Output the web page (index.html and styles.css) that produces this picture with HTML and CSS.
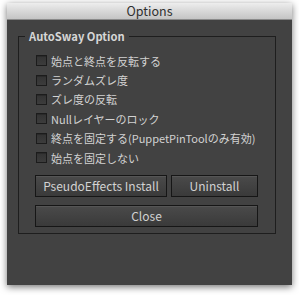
FILE: index.html
```html
<!DOCTYPE html>
<html>
<head>
<meta charset="utf-8">
<link rel="stylesheet" href="styles.css">
</head>
<body>
<div class="window">
  <div class="titlebar">Options</div>
  <div class="content">
    <fieldset class="group">
      <legend class="legend">AutoSway Option</legend>
      <div class="options">
        <label class="row"><span class="box"></span><span class="label">始点と終点を反転する</span></label>
        <label class="row"><span class="box"></span><span class="label">ランダムズレ度</span></label>
        <label class="row"><span class="box"></span><span class="label">ズレ度の反転</span></label>
        <label class="row"><span class="box"></span><span class="label">Nullレイヤーのロック</span></label>
        <label class="row"><span class="box"></span><span class="label">終点を固定する(PuppetPinToolのみ有効)</span></label>
        <label class="row"><span class="box"></span><span class="label">始点を固定しない</span></label>
      </div>
      <div class="buttons">
        <div class="btnrow">
          <button class="btn btn-install">PseudoEffects Install</button>
          <button class="btn btn-uninstall">Uninstall</button>
        </div>
        <button class="btn btn-close">Close</button>
      </div>
    </fieldset>
  </div>
</div>
</body>
</html>
```
FILE: styles.css
```css
html, body {
  margin: 0;
  padding: 0;
  background: #ffffff;
}
body {
  width: 299px;
  height: 295px;
  overflow: hidden;
  font-family: "Noto Sans CJK JP", "DejaVu Sans", sans-serif;
}
.window {
  margin: 3px 0 0 7px;
  width: 285px;
  height: 282px;
  background: #424242;
  box-shadow: 0 2px 7px rgba(0, 0, 0, 0.55);
  display: flex;
  flex-direction: column;
}
.titlebar {
  height: 17px;
  flex: 0 0 17px;
  box-sizing: border-box;
  background: linear-gradient(#ededed, #d0d0d0 70%, #c4c4c4);
  border-bottom: 1px solid #8a8a8a;
  color: #303030;
  font-size: 12.5px;
  line-height: 16px;
  text-align: center;
}
.content {
  flex: 1;
  padding: 9px 16px 0 11px;
}
.group {
  margin: 0;
  padding: 0 17px 0 16px;
  border: 1px solid #1e1e1e;
  height: 205px;
  box-sizing: border-box;
  min-width: 0;
}
.legend {
  margin-left: -10px;
  padding: 0 4px;
  color: #d6d6d6;
  font-size: 11.2px;
  font-weight: bold;
  line-height: 14px;
  height: 14px;
}
.options {
  padding-top: 8px;
  display: flex;
  flex-direction: column;
}
.row {
  display: flex;
  align-items: center;
  height: 19.4px;
  padding-left: 1px;
}
.box {
  width: 9px;
  height: 9px;
  border: 1px solid #1c1c1c;
  background: linear-gradient(#333333, #3c3c3c);
  box-shadow: inset 0 1px 0 #2a2a2a;
  flex: 0 0 auto;
}
.label {
  margin-left: 4px;
  color: #d2d2d2;
  font-size: 11px;
  line-height: 14px;
  white-space: nowrap;
}
.buttons {
  margin-top: 8px;
  display: flex;
  flex-direction: column;
  gap: 8px;
}
.btnrow {
  display: flex;
  gap: 4px;
}
.btn {
  height: 22px;
  margin: 0;
  padding: 0;
  border: 1px solid #161616;
  background: linear-gradient(#4a4a4a, #3a3a3a);
  box-shadow: inset 0 1px 0 #555555;
  color: #d2d2d2;
  font-family: "Noto Sans CJK JP", "DejaVu Sans", sans-serif;
  font-size: 12px;
  line-height: 18px;
}
.btn-install {
  width: 132px;
}
.btn-uninstall {
  width: 87px;
}
.btn-close {
  width: 223px;
}
```
